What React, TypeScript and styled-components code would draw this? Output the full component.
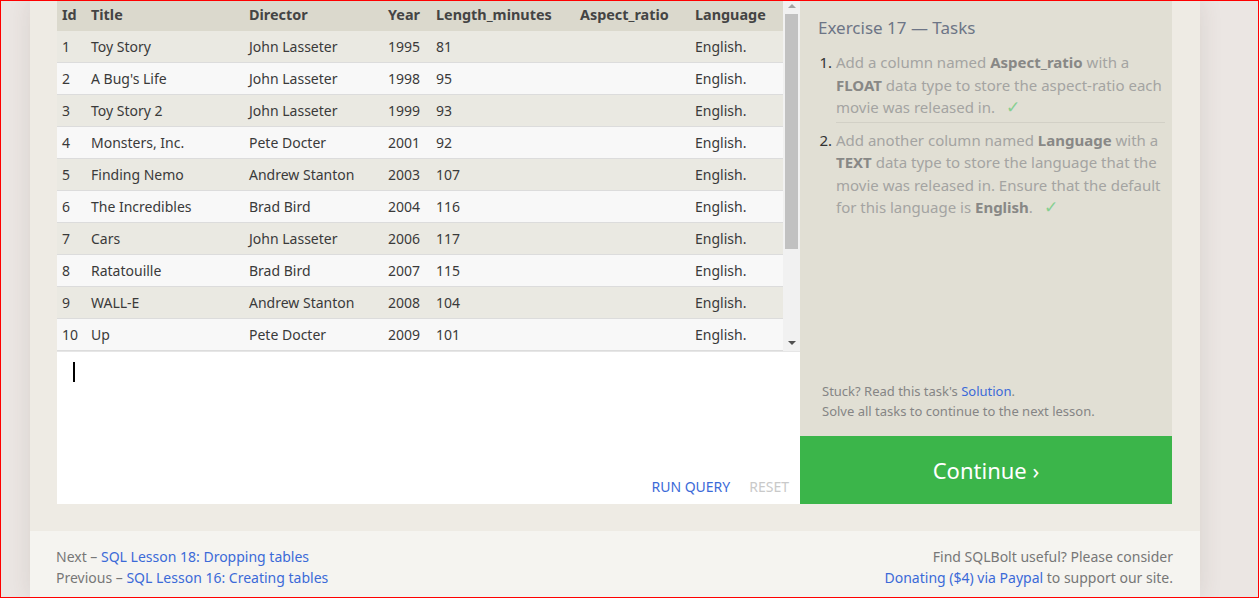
import React from "react";
import styled, { createGlobalStyle } from "styled-components";

const GlobalStyle = createGlobalStyle`
  html, body { margin: 0; padding: 0; height: 100%; }
  body {
    font-family: "Noto Sans", "Open Sans", sans-serif;
    background: #ebe6e3;
    overflow: hidden;
    color: #3a3a3a;
  }
  #root { height: 100%; }
`;

const Frame = styled.div`
  height: 100vh;
  box-sizing: border-box;
  border: 1px solid #ff0000;
  padding-left: 29px;
  display: flex;
  overflow: hidden;
  background: #ebe6e3;
`;

const Main = styled.div`
  width: 1170px;
  flex: none;
  display: flex;
  flex-direction: column;
  background: #eeebe4;
  box-shadow: 0 0 22px rgba(80, 60, 50, 0.12);
`;

const Workspace = styled.div`
  display: flex;
  padding: 0 28px 27px 27px;
`;

const TablePanel = styled.div`
  width: 743px;
  height: 503px;
  display: flex;
  flex-direction: column;
  background: #ffffff;
`;

const Results = styled.div`
  display: flex;
  height: 350px;
  flex: none;
  background: #f8f8f8;
`;

const Grid = styled.div`
  width: 726px;
  display: flex;
  flex-direction: column;
`;

const cols = "29px 158px 139px 48px 144px 115px 93px";

const HeadRow = styled.div`
  display: grid;
  grid-template-columns: ${cols};
  height: 30px;
  padding-bottom: 3px;
  box-sizing: border-box;
  align-items: center;
  background: #dbd9cd;
  font-weight: 700;
  font-size: 14.4px;
  color: #444;
`;

const Row = styled.div<{ $odd: boolean }>`
  display: grid;
  grid-template-columns: ${cols};
  height: 31px;
  padding-bottom: 1px;
  box-sizing: border-box;
  border-bottom: 1px solid #dcdcdc;
  align-items: center;
  background: ${(p) => (p.$odd ? "#eae9e2" : "#f8f8f8")};
  font-size: 14px;
  color: #3a3a3a;
  height: 32px;
`;

const Cell = styled.div`
  padding-left: 5px;
  white-space: nowrap;
  overflow: hidden;
`;

const ScrollTrack = styled.div`
  width: 17px;
  flex: none;
  background: #f1f1f1;
  display: flex;
  flex-direction: column;
  align-items: center;
  height: 350px;
`;

const Arrow = styled.div<{ $down?: boolean; $dim?: boolean }>`
  width: 0;
  height: 0;
  border-left: 4px solid transparent;
  border-right: 4px solid transparent;
  ${(p) =>
    p.$down
      ? `border-top: 4px solid ${p.$dim ? "#a3a3a3" : "#505050"}; margin-bottom: 6px;`
      : `border-bottom: 4px solid ${p.$dim ? "#a3a3a3" : "#505050"}; margin-top: 3px;`}
`;

const Thumb = styled.div`
  width: 13px;
  height: 235px;
  margin-top: 6px;
  background: #c1c1c1;
`;

const TrackSpace = styled.div`
  flex: 1;
`;

const Editor = styled.div`
  flex: 1;
  display: flex;
  flex-direction: column;
  padding: 10px 0 0 16px;
  background: #fff;
  border-top: 1px solid #e6e6e6;
`;

const Caret = styled.div`
  width: 2px;
  height: 20px;
  background: #000;
`;

const Actions = styled.div`
  margin-top: auto;
  display: flex;
  justify-content: flex-end;
  gap: 19px;
  padding: 0 11px 7px 0;
  font-size: 14px;
  line-height: 21px;
`;

const ActionLink = styled.span<{ $muted?: boolean }>`
  color: ${(p) => (p.$muted ? "#c9c9c9" : "#3b6ad8")};
`;

const TaskPanel = styled.div`
  width: 372px;
  height: 503px;
  display: flex;
  flex-direction: column;
  background: #e1dfd4;
`;

const TaskBody = styled.div`
  padding: 15px 7px 0 18px;
`;

const Title = styled.h2`
  margin: 0;
  font-size: 17px;
  line-height: 24px;
  font-weight: 400;
  color: #6d7586;
`;

const TaskList = styled.ol`
  margin: 11px 0 0;
  padding-left: 18px;
`;

const TaskItem = styled.li`
  font-size: 15px;
  line-height: 22.5px;
  color: #a4a4a2;
  padding-bottom: 3px;
  white-space: nowrap;
  &::marker { color: #333; }
  & + & {
    border-top: 1px solid #d2d0c6;
    padding-top: 6px;
  }
  strong { color: #888886; font-weight: 700; }
`;

const Check = styled.span`
  color: #87cf92;
  margin-left: 11px;
  font-family: "DejaVu Sans", sans-serif;
  font-size: 17px;
  line-height: 1;
`;

const Notes = styled.div`
  margin-top: auto;
  padding: 0 18px 15px 22px;
  font-size: 13px;
  line-height: 20px;
  color: #858585;
`;

const Link = styled.a`
  color: #3b6ad8;
  text-decoration: none;
`;

const ContinueButton = styled.div`
  height: 68px;
  flex: none;
  background: #3bb54a;
  color: #fff;
  font-size: 22px;
  display: flex;
  align-items: center;
  justify-content: center;
`;

const Footer = styled.div`
  flex: 1;
  background: #f5f4f0;
  display: flex;
  justify-content: space-between;
  padding: 15px 27px 0 26px;
  font-size: 14px;
  line-height: 21px;
  color: #777;
`;

const FooterCol = styled.div<{ $right?: boolean }>`
  text-align: ${(p) => (p.$right ? "right" : "left")};
`;

const movies = [
  [1, "Toy Story", "John Lasseter", 1995, 81],
  [2, "A Bug's Life", "John Lasseter", 1998, 95],
  [3, "Toy Story 2", "John Lasseter", 1999, 93],
  [4, "Monsters, Inc.", "Pete Docter", 2001, 92],
  [5, "Finding Nemo", "Andrew Stanton", 2003, 107],
  [6, "The Incredibles", "Brad Bird", 2004, 116],
  [7, "Cars", "John Lasseter", 2006, 117],
  [8, "Ratatouille", "Brad Bird", 2007, 115],
  [9, "WALL-E", "Andrew Stanton", 2008, 104],
  [10, "Up", "Pete Docter", 2009, 101],
];

const headers = ["Id", "Title", "Director", "Year", "Length_minutes", "Aspect_ratio", "Language"];

export default function App() {
  return (
    <>
      <GlobalStyle />
      <Frame>
        <Main>
          <Workspace>
            <TablePanel>
              <Results>
                <Grid>
                  <HeadRow>
                    {headers.map((h) => (
                      <Cell key={h}>{h}</Cell>
                    ))}
                  </HeadRow>
                  {movies.map((m, i) => (
                    <Row key={m[0] as number} $odd={i % 2 === 0}>
                      <Cell>{m[0]}</Cell>
                      <Cell>{m[1]}</Cell>
                      <Cell>{m[2]}</Cell>
                      <Cell>{m[3]}</Cell>
                      <Cell>{m[4]}</Cell>
                      <Cell></Cell>
                      <Cell>English.</Cell>
                    </Row>
                  ))}
                </Grid>
                <ScrollTrack>
                  <Arrow $dim />
                  <Thumb />
                  <TrackSpace />
                  <Arrow $down />
                </ScrollTrack>
              </Results>
              <Editor>
                <Caret />
                <Actions>
                  <ActionLink>RUN QUERY</ActionLink>
                  <ActionLink $muted>RESET</ActionLink>
                </Actions>
              </Editor>
            </TablePanel>
            <TaskPanel>
              <TaskBody>
                <Title>Exercise 17 — Tasks</Title>
                <TaskList>
                  <TaskItem>
                    Add a column named <strong>Aspect_ratio</strong> with a
                    <br />
                    <strong>FLOAT</strong> data type to store the aspect-ratio each
                    <br />
                    movie was released in.<Check>✓</Check>
                  </TaskItem>
                  <TaskItem>
                    Add another column named <strong>Language</strong> with a
                    <br />
                    <strong>TEXT</strong> data type to store the language that the
                    <br />
                    movie was released in. Ensure that the default
                    <br />
                    for this language is <strong>English</strong>.<Check>✓</Check>
                  </TaskItem>
                </TaskList>
              </TaskBody>
              <Notes>
                Stuck? Read this task's <Link>Solution</Link>.
                <br />
                Solve all tasks to continue to the next lesson.
              </Notes>
              <ContinueButton>Continue ›</ContinueButton>
            </TaskPanel>
          </Workspace>
          <Footer>
            <FooterCol>
              Next – <Link>SQL Lesson 18: Dropping tables</Link>
              <br />
              Previous – <Link>SQL Lesson 16: Creating tables</Link>
            </FooterCol>
            <FooterCol $right>
              Find SQLBolt useful? Please consider
              <br />
              <Link>Donating ($4) via Paypal</Link> to support our site.
            </FooterCol>
          </Footer>
        </Main>
      </Frame>
    </>
  );
}
